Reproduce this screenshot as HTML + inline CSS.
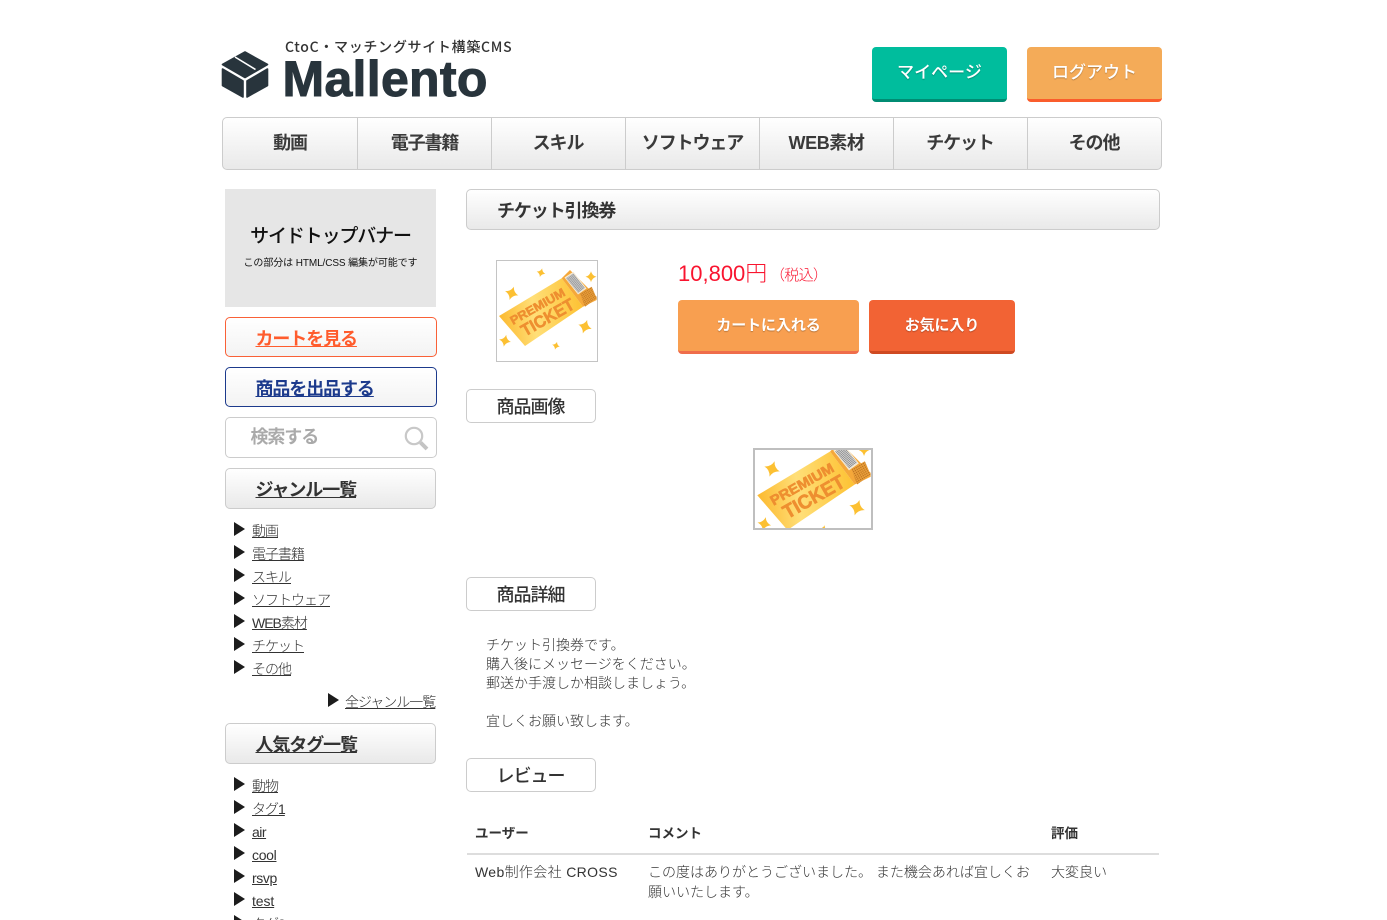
<!DOCTYPE html>
<html lang="ja"><head><meta charset="utf-8"><title>Mallento</title>
<style>
html,body{margin:0;padding:0;background:#fff;height:920px;overflow:hidden}
body{width:1387px;position:relative;font-family:"Liberation Sans","Noto Sans CJK JP",sans-serif;color:#333}
.a{position:absolute;box-sizing:border-box;white-space:nowrap}
a{color:inherit}
.grad{background:linear-gradient(#fff,#e9e9e9);border:1px solid #ccc;border-radius:5px}
.btn{color:#fff;font-weight:500;text-align:center;border-radius:4px;text-shadow:0 1px 1px rgba(0,0,0,.25)}
.nav{top:118px;height:51px;line-height:51px;text-align:center;font-size:18px;font-weight:700;color:#3a3a3a;border-right:1px solid #ccc;letter-spacing:-1.1px}
.side{left:225px;height:41px;line-height:43px;padding-left:29.5px;font-size:18px;font-weight:700;letter-spacing:-1.1px;border-radius:5px}
.li{left:252px;font-size:14px;line-height:20px;letter-spacing:-1px;color:#333;font-weight:300}
.tri{width:0;height:0;border-left:11px solid #1c1c1c;border-top:7px solid transparent;border-bottom:7px solid transparent}
.sub{left:466px;width:130px;height:34px;line-height:35px;text-align:center;border:1px solid #ccc;border-radius:5px;font-size:18px;font-weight:500;letter-spacing:-1px;background:#fff;color:#333;padding-right:1px}
.t{font-size:14px;line-height:20px;color:#333;font-weight:300}
.th{font-size:13.5px;line-height:20px;color:#333;font-weight:700}
</style></head><body>

<svg class="a" style="left:220px;top:49px" width="52" height="52" viewBox="220 49 52 52">
<g fill="#28343c" stroke="#28343c" stroke-width="1.6" stroke-linejoin="round">
<polygon points="245,52 267.5,64.5 245,77.5 222.5,64.5"/>
<polygon points="222.5,69 243,81 243,97 222.5,85.5"/>
<polygon points="267.5,69 247,81 247,97 267.5,85.5"/>
</g>
<line x1="235" y1="57" x2="255.5" y2="69.5" stroke="#fff" stroke-width="1.6"/>
</svg>
<div class="a" style="left:285px;top:37px;font-family:'Noto Sans CJK JP','Liberation Sans',sans-serif;font-size:14px;line-height:20px;letter-spacing:.7px;color:#333;font-weight:500">CtoC・マッチングサイト構築CMS</div>
<div class="a" style="left:282.5px;top:50px;font-size:50px;line-height:58px;font-weight:700;color:#28343c;-webkit-text-stroke:1px #28343c;letter-spacing:.3px">Mallento</div>

<div class="a btn" style="left:872px;top:47px;width:135px;height:55px;line-height:52px;font-size:17px;background:#00bd9d;border-bottom:3px solid #008c73">マイページ</div>
<div class="a btn" style="left:1027px;top:47px;width:135px;height:55px;line-height:52px;font-size:17px;background:#f4ab58;border-bottom:3px solid #fa5d2c">ログアウト</div>

<div class="a grad" style="left:222px;top:117px;width:940px;height:53px"></div>
<div class="a nav" style="left:223px;width:135px">動画</div>
<div class="a nav" style="left:358px;width:134px">電子書籍</div>
<div class="a nav" style="left:492px;width:134px;padding-right:1px">スキル</div>
<div class="a nav" style="left:626px;width:134px">ソフトウェア</div>
<div class="a nav" style="left:760px;width:134px;letter-spacing:-.4px">WEB素材</div>
<div class="a nav" style="left:894px;width:134px;padding-right:1px">チケット</div>
<div class="a nav" style="left:1028px;width:132px;border-right:0">その他</div>

<!-- sidebar -->
<div class="a" style="left:225px;top:189px;width:211px;height:118px;background:#e6e6e6"></div>
<div class="a" style="left:225px;top:223px;width:211px;text-align:center;font-size:19px;line-height:28px;color:#111;font-weight:500;letter-spacing:-1.15px">サイドトップバナー</div>
<div class="a" style="left:225px;top:256px;width:211px;text-align:center;font-size:10px;line-height:15px;color:#111;letter-spacing:-.1px">この部分は HTML/CSS 編集が可能です</div>

<div class="a side" style="top:317px;width:212px;height:40px;border:1px solid #f96137;color:#ff5c2d;background:linear-gradient(#fff,#f3f3f3)"><a href="#">カートを見る</a></div>
<div class="a side" style="top:367px;width:212px;height:40px;border:1px solid #1c3a8c;color:#1c3a8c;background:linear-gradient(#fff,#f3f3f3)"><a href="#">商品を出品する</a></div>
<div class="a side" style="top:417px;width:212px;border:1px solid #ccc;color:#aaa;background:#fff;padding-left:24.5px;line-height:38px">検索する</div>
<svg class="a" style="left:403px;top:425px" width="27" height="27" viewBox="0 0 27 27"><circle cx="11" cy="11" r="8.2" fill="none" stroke="#c8c8c8" stroke-width="2.2"/><line x1="17.5" y1="17.5" x2="24" y2="24" stroke="#c4c4c4" stroke-width="4"/></svg>
<div class="a side grad" style="top:468px;width:211px;color:#333"><a href="#">ジャンル一覧</a></div>

<div class="a tri" style="left:234px;top:522px"></div><div class="a li" style="top:521px"><a href="#">動画</a></div>
<div class="a tri" style="left:234px;top:545px"></div><div class="a li" style="top:544px"><a href="#">電子書籍</a></div>
<div class="a tri" style="left:234px;top:568px"></div><div class="a li" style="top:567px"><a href="#">スキル</a></div>
<div class="a tri" style="left:234px;top:591px"></div><div class="a li" style="top:590px"><a href="#">ソフトウェア</a></div>
<div class="a tri" style="left:234px;top:614px"></div><div class="a li" style="top:613px"><a href="#">WEB素材</a></div>
<div class="a tri" style="left:234px;top:637px"></div><div class="a li" style="top:636px"><a href="#">チケット</a></div>
<div class="a tri" style="left:234px;top:660px"></div><div class="a li" style="top:659px"><a href="#">その他</a></div>
<div class="a tri" style="left:328px;top:693px"></div><div class="a li" style="left:345px;top:692px"><a href="#">全ジャンル一覧</a></div>

<div class="a side grad" style="top:723px;width:211px;color:#333"><a href="#">人気タグ一覧</a></div>
<div class="a tri" style="left:234px;top:777px"></div><div class="a li" style="top:776px"><a href="#">動物</a></div>
<div class="a tri" style="left:234px;top:800px"></div><div class="a li" style="top:799px"><a href="#">タグ1</a></div>
<div class="a tri" style="left:234px;top:823px"></div><div class="a li" style="top:822px;letter-spacing:-.5px"><a href="#">air</a></div>
<div class="a tri" style="left:234px;top:846px"></div><div class="a li" style="top:845px;letter-spacing:-.3px"><a href="#">cool</a></div>
<div class="a tri" style="left:234px;top:869px"></div><div class="a li" style="top:868px;letter-spacing:-.4px"><a href="#">rsvp</a></div>
<div class="a tri" style="left:234px;top:892px"></div><div class="a li" style="top:891px;letter-spacing:-.1px"><a href="#">test</a></div>
<div class="a tri" style="left:234px;top:915px"></div><div class="a li" style="top:914px"><a href="#">タグ3</a></div>

<!-- main -->
<div class="a grad" style="left:466px;top:189px;width:694px;height:41px;line-height:42px;padding-left:30px;font-size:18px;font-weight:700;letter-spacing:-1.1px;color:#333">チケット引換券</div>

<svg class="a" style="left:496px;top:260px;border:1px solid #c4c4c4;box-sizing:content-box" width="100" height="100" viewBox="0 0 100 100">
<defs>
<linearGradient id="g" gradientUnits="userSpaceOnUse" x1="2" y1="55" x2="85" y2="45"><stop offset="0" stop-color="#fcb92f"/><stop offset=".42" stop-color="#ffdf78"/><stop offset="1" stop-color="#fdc234"/></linearGradient>
<pattern id="sp" width="1.8" height="1.8" patternUnits="userSpaceOnUse" patternTransform="rotate(-30)"><rect width="1.8" height="1.8" fill="#e9a03a"/><rect width="1" height="1" fill="#bb6e1e"/></pattern>
<pattern id="bc" width="1.3" height="8" patternUnits="userSpaceOnUse" patternTransform="rotate(52)"><rect width="1.3" height="8" fill="#e6e6e6"/><rect width=".7" height="8" fill="#858585"/></pattern>
<g id="tk">
<polygon points="2,55 64.7,17.3 86,45.7 28,85" fill="url(#g)"/>
<polygon points="64.7,17.3 73,9 99.7,35.7 99.7,39 86,45.7" fill="#f5a83a"/>
<polygon points="67.5,16.5 76.3,10.8 89.5,27.5 81,33.5" fill="#f6ead4"/>
<polygon points="69,17.3 76.3,12.3 88,27 81.3,32" fill="url(#bc)"/>
<polygon points="83,32.3 94.7,25.7 99.7,37.3 88,45.7" fill="url(#sp)"/>
<g font-family="'Liberation Sans',sans-serif" font-weight="700" fill="#ee8f30" stroke="#ee8f30" stroke-width=".55">
<text x="0" y="0" font-size="12" transform="translate(16,64) rotate(-29.5)" textLength="61" lengthAdjust="spacingAndGlyphs">PREMIUM</text>
<text x="0" y="0" font-size="17" transform="translate(28,75.7) rotate(-29.5)" textLength="58.5" lengthAdjust="spacingAndGlyphs">TICKET</text>
</g>
<g fill="#fcc032">
<path transform="translate(44,11.7) rotate(15) scale(4.5)" d="M0-1Q.2-.2 1 0Q.2.2 0 1Q-.2.2-1 0Q-.2-.2 0-1z"/>
<path transform="translate(94,15.7) rotate(0) scale(5.5)" d="M0-1Q.2-.2 1 0Q.2.2 0 1Q-.2.2-1 0Q-.2-.2 0-1z"/>
<path transform="translate(14.7,32.3) rotate(18) scale(7)" d="M0-1Q.2-.2 1 0Q.2.2 0 1Q-.2.2-1 0Q-.2-.2 0-1z"/>
<path transform="translate(88,65.7) rotate(18) scale(7)" d="M0-1Q.2-.2 1 0Q.2.2 0 1Q-.2.2-1 0Q-.2-.2 0-1z"/>
<path transform="translate(8,79.7) rotate(12) scale(6)" d="M0-1Q.2-.2 1 0Q.2.2 0 1Q-.2.2-1 0Q-.2-.2 0-1z"/>
<path transform="translate(59,84.7) rotate(15) scale(4)" d="M0-1Q.2-.2 1 0Q.2.2 0 1Q-.2.2-1 0Q-.2-.2 0-1z"/>
</g>
</g>
</defs>
<use href="#tk"/>
</svg>

<div class="a" style="left:678px;top:258px;font-size:22px;line-height:32px;color:#f9142f;font-weight:300">10,800円</div>
<div class="a" style="left:770px;top:266px;font-size:15px;line-height:20px;color:#f9142f;font-weight:300;letter-spacing:-.7px">（税込）</div>
<div class="a btn" style="left:678px;top:300px;width:181px;height:54px;line-height:51px;font-size:15px;font-weight:700;letter-spacing:-.1px;background:#f89f50;border-bottom:3px solid #ef6d4b">カートに入れる</div>
<div class="a btn" style="left:869px;top:300px;width:146px;height:54px;line-height:51px;font-size:15px;font-weight:700;letter-spacing:-.1px;background:#f26334;border-bottom:3px solid #cf4a22">お気に入り</div>

<div class="a sub" style="top:389px">商品画像</div>
<svg class="a" style="left:753px;top:448px;border:2px solid #bfbfbf;box-sizing:content-box" width="116" height="78" viewBox="0 16 100 67.2"><use href="#tk"/></svg>

<div class="a sub" style="top:577px">商品詳細</div>
<div class="a t" style="left:486px;top:636px;line-height:19px">チケット引換券です。<br>購入後にメッセージをください。<br>郵送か手渡しか相談しましょう。<br><br>宜しくお願い致します。</div>
<div class="a sub" style="top:758px">レビュー</div>

<div class="a th" style="left:475px;top:824px">ユーザー</div>
<div class="a th" style="left:648px;top:824px">コメント</div>
<div class="a th" style="left:1051px;top:824px">評価</div>
<div class="a" style="left:467px;top:853px;width:692px;height:2px;background:#ddd"></div>
<div class="a t" style="left:475px;top:862px;letter-spacing:.35px">Web制作会社 CROSS</div>
<div class="a t" style="left:648px;top:862px;line-height:20px">この度はありがとうございました。 また機会あれば宜しくお<br>願いいたします。</div>
<div class="a t" style="left:1051px;top:862px">大変良い</div>
</body></html>
